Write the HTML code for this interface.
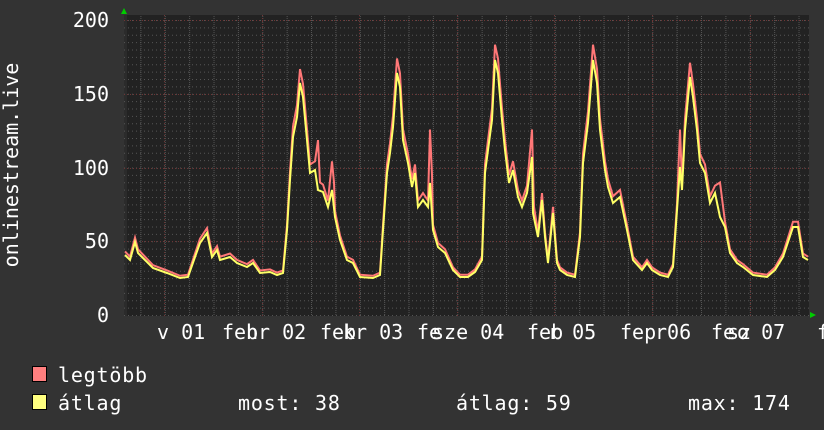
<!DOCTYPE html>
<html><head><meta charset="utf-8"><style>
html,body{margin:0;padding:0;background:#333;}
svg{display:block}
text{font-family:"DejaVu Sans Mono","Liberation Mono",monospace;fill:#fff}
.lg text{letter-spacing:0.8px}
</style></head><body>
<svg width="824" height="430" viewBox="0 0 824 430" xmlns="http://www.w3.org/2000/svg">
<defs>
<pattern id="hmin" x="0" y="20" width="8" height="7.375" patternUnits="userSpaceOnUse">
<rect x="0" y="0" width="1" height="1" fill="#555"/><rect x="4" y="0" width="1" height="1" fill="#555"/>
</pattern>
<pattern id="vmin" x="140.4" y="0" width="24.375" height="4" patternUnits="userSpaceOnUse">
<rect x="0" y="0" width="1" height="1" fill="#555"/><rect x="0" y="2" width="1" height="1" fill="#555"/>
</pattern>
</defs>
<rect x="124" y="15" width="685" height="301" fill="#222"/>
<rect x="124" y="15" width="3" height="301" fill="#2b2b2b"/>
<rect x="124" y="20" width="685" height="296" fill="url(#hmin)"/>
<rect x="124" y="15" width="685" height="301" fill="url(#vmin)"/>
<g stroke="#6e3535" stroke-width="1" stroke-dasharray="1,2">
<line x1="124" y1="20.5" x2="809" y2="20.5"/><line x1="124" y1="94.5" x2="809" y2="94.5"/>
<line x1="124" y1="168.5" x2="809" y2="168.5"/><line x1="124" y1="241.5" x2="809" y2="241.5"/>
<line x1="164.5" y1="15" x2="164.5" y2="316"/><line x1="262.5" y1="15" x2="262.5" y2="316"/>
<line x1="359.5" y1="15" x2="359.5" y2="316"/><line x1="457.5" y1="15" x2="457.5" y2="316"/>
<line x1="554.5" y1="15" x2="554.5" y2="316"/><line x1="652.5" y1="15" x2="652.5" y2="316"/>
<line x1="750.5" y1="15" x2="750.5" y2="316"/>
</g>
<polygon points="121,14 127,14 124,8" fill="#0c0"/>
<polygon points="810,312 810,318 816,315" fill="#0c0"/>
<g fill="none" stroke-width="2" stroke-linejoin="miter">
<polyline vector-effect="non-scaling-stroke" stroke="#ff7777" transform="translate(0,315) scale(1,1.06) translate(0,-315)" points="125,255 130,260 135,242 138,253 145,260 153,268 167,273 180,278 188,277 195,257 200,243 207,233 212,257 217,250 220,260 230,257 237,263 247,267 253,263 260,273 270,272 277,275 283,273 287,230 290,180 293,137 297,117 300,83 303,97 307,140 310,173 315,170 318,150 320,190 323,192 328,207 332,170 334,190 335,217 340,240 347,260 353,263 360,277 373,278 380,275 383,230 387,173 390,153 393,127 397,73 400,87 403,140 408,163 412,187 415,173 418,207 423,200 428,207 430,140 432,183 433,230 438,247 445,253 453,270 460,277 468,277 475,272 482,260 485,173 488,150 492,120 495,60 498,73 502,120 505,150 509,183 513,170 518,197 522,207 527,193 532,140 534,213 538,237 542,200 545,237 548,263 553,213 557,263 560,270 567,275 575,277 580,237 583,163 588,123 593,60 597,83 600,130 605,170 608,187 613,203 620,197 627,230 633,260 642,270 647,263 652,270 660,275 668,277 673,267 677,210 680,140 682,190 685,130 690,77 693,97 697,130 700,163 705,173 710,203 715,193 720,190 725,227 730,253 737,263 743,267 753,275 767,277 775,270 783,257 793,227 798,227 803,257 808,260"/>
<polyline vector-effect="non-scaling-stroke" stroke="#ffff66" points="125,255 130,260 135,242 138,253 145,260 153,268 167,273 180,278 188,277 195,257 200,243 207,233 212,257 217,250 220,260 230,257 237,263 247,267 253,263 260,273 270,272 277,275 283,273 287,230 290,180 293,137 297,117 300,83 303,97 307,140 310,173 315,170 318,190 323,192 328,207 332,190 335,217 340,240 347,260 353,263 360,277 373,278 380,275 383,230 387,173 390,153 393,127 397,73 400,87 403,140 408,163 412,187 415,173 418,207 423,200 428,207 430,183 433,230 438,247 445,253 453,270 460,277 468,277 475,272 482,260 485,173 488,150 492,120 495,60 498,73 502,120 505,150 509,183 513,170 518,197 522,207 527,193 532,157 533,213 538,237 542,200 545,237 548,263 553,213 557,263 560,270 567,275 575,277 580,237 583,163 588,123 593,60 597,83 600,130 605,170 608,187 613,203 620,197 627,230 633,260 642,270 647,263 652,270 660,275 668,277 673,267 677,210 680,167 682,190 685,130 690,77 693,97 697,130 700,163 705,173 710,203 715,193 720,217 725,227 730,253 737,263 743,267 753,275 767,277 775,270 783,257 793,227 798,227 803,257 808,260"/>
</g>
<g font-size="20" text-anchor="end">
<text x="109" y="27">200</text><text x="109" y="101">150</text>
<text x="109" y="175">100</text><text x="109" y="248">50</text><text x="109" y="322">0</text>
</g>
<text font-size="20" transform="translate(18,165) rotate(-90)" text-anchor="middle">onlinestream.live</text>
<g font-size="20">
<text x="157" y="339">v 01</text>
<text x="222" y="339">feb</text><text x="246" y="339">hr 02</text>
<text x="320" y="339">feb</text><text x="343" y="339">kr 03</text>
<text x="417" y="339">fe</text><text x="432" y="339">sze 04</text>
<text x="527" y="339">feb</text><text x="548" y="339">r 05</text>
<text x="620" y="339">fep</text><text x="655" y="339">r06</text>
<text x="711" y="339">fe</text><text x="727" y="339">sz</text><text x="737" y="339">o 07</text>
<text x="817" y="339">f</text>
</g>
<rect x="32.5" y="366.5" width="14" height="15" fill="#ff7f7f" stroke="#000"/>
<rect x="32.5" y="394.5" width="14" height="15" fill="#ffff7f" stroke="#000"/>
<g font-size="20" class="lg">
<text x="58" y="382">legtöbb</text>
<text x="58" y="410">átlag</text>
<text x="238" y="410">most: 38</text>
<text x="456" y="410">átlag: 59</text>
<text x="688" y="410">max: 174</text>
</g>
</svg>
</body></html>
